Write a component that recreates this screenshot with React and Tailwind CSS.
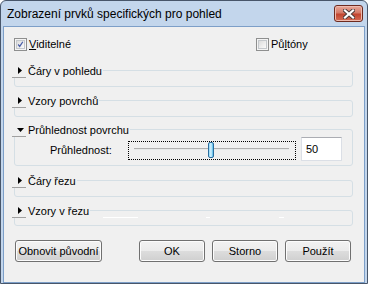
import { useState } from "react";

const btn =
  "flex h-[22px] w-[66px] items-center justify-center rounded-[3px] border border-[#707070] bg-[linear-gradient(#f2f2f2,#ebebeb_50%,#dddddd_50%,#cfcfcf)] shadow-[inset_0_0_0_1px_#fcfcfc]";

function Check({ checked }) {
  return (
    <span className="flex h-[13px] w-[13px] items-center justify-center border border-[#8e8f8f] bg-[#f4f4f4]">
      <span className="flex h-[9px] w-[9px] items-center justify-center border border-[#c4c8cc] bg-[linear-gradient(135deg,#dcdcdc,#fafafa)]">
        {checked && (
          <svg width="9" height="9" viewBox="0 0 9 9">
            <path d="M1.5 4.5 L3.5 7 L7.5 1" fill="none" stroke="#4a5fa8" strokeWidth="1.6" />
          </svg>
        )}
      </span>
    </span>
  );
}

function Section({ title, open, cls, children }) {
  return (
    <div className={`relative w-[339px] rounded-[3px] border border-[#d5dfe5] ${cls}`}>
      <div className="absolute left-[-3px] top-[-7px] flex h-[14px] items-center bg-[#f0f0f0] pr-[1px]">
        <div className="flex h-[14px] w-[14px] items-center border-b border-[#a0a0a0]">
          {open ? (
            <svg className="ml-[5px]" width="7" height="4" viewBox="0 0 7 4">
              <polygon points="0,0 7,0 3.5,4" fill="#000" />
            </svg>
          ) : (
            <svg className="ml-[6px]" width="4" height="7" viewBox="0 0 4 7">
              <polygon points="0,0 4,3.5 0,7" fill="#000" />
            </svg>
          )}
        </div>
        <span className="ml-[2px] leading-[14px]">{title}</span>
      </div>
      {children}
    </div>
  );
}

export default function App() {
  const [visible, setVisible] = useState(true);
  const [half, setHalf] = useState(false);
  const [value] = useState(50);

  return (
    <div className="flex h-[284px] w-[368px] flex-col rounded-t-[6px] border border-[#48566a] bg-[#c3d6ec] font-['Liberation_Sans',Arial,sans-serif] text-[11px] text-black">
      {/* title bar */}
      <div className="flex h-[25px] shrink-0 items-start">
        <span className="mt-[5px] pl-[6px] text-[12px] leading-[16px]">Zobrazení prvků specifických pro pohled</span>
        <div className="ml-auto mr-[4px] mt-[4px] flex h-[17px] w-[29px] items-center justify-center rounded-[3px] border border-[#6d2a1f] bg-[linear-gradient(#e8a899,#d47a68_45%,#c2452f_55%,#d46c55)] shadow-[inset_0_0_0_1px_#eebbaf]">
          <svg width="12" height="10" viewBox="0 0 12 10">
            <path d="M2 1.5 L10 8.5 M10 1.5 L2 8.5" stroke="#4a3a38" strokeWidth="4" strokeLinecap="square" />
            <path d="M2 1.5 L10 8.5 M10 1.5 L2 8.5" stroke="#fff" strokeWidth="2.2" strokeLinecap="square" />
          </svg>
        </div>
      </div>

      {/* client */}
      <div className="mx-[2px] flex flex-1 flex-col border border-[#7d9fc8] bg-[#f0f0f0]">
        <div className="flex pl-[10px] pt-[11px]">
          <label className="flex w-[242px] items-center leading-[13px]" onClick={() => setVisible(!visible)}>
            <Check checked={visible} />
            <span className="ml-[2px]"><u>V</u>iditelné</span>
          </label>
          <label className="flex items-center leading-[13px]" onClick={() => setHalf(!half)}>
            <Check checked={half} />
            <span className="ml-[2px]">Pů<u>l</u>tóny</span>
          </label>
        </div>

        <div className="flex flex-col pl-[10px]">
          <Section title="Čáry v pohledu" cls="mt-[19px] h-[17px]" />
          <Section title="Vzory povrchů" cls="mt-[13px] h-[17px]" />
          <Section title="Průhlednost povrchu" open cls="mt-[12px] h-[37px]">
            <div className="flex">
              <span className="ml-[35px] mt-[13px] w-[78px] leading-[14px]">Průhlednost:</span>
              <div className="relative mt-[11px] h-[19px] w-[168px] border border-dotted border-black">
                <div className="ml-[5px] mt-[6px] h-[2px] w-[155px] border-t border-[#b0b0b0] bg-[#e7eaea]" />
                <div
                  className="absolute top-0 h-[16px] w-[6px] rounded-[2px] border border-[#2c6e9e] bg-[linear-gradient(90deg,#8fd6f7,#d9f3fd_50%,#4fb8ea)]"
                  style={{ left: 4 + Math.round((value / 100) * 150) }}
                />
              </div>
              <div className="ml-[5px] mt-[7px] flex h-[24px] w-[41px] items-center border border-[#dbdfe6] border-t-[#abadb3] bg-white pl-[4px] leading-[14px]">
                {value}
              </div>
            </div>
          </Section>
          <Section title="Čáry řezu" cls="mt-[14px] h-[17px]" />
          <Section title="Vzory v řezu" cls="mt-[13px] h-[16px]">
            <div className="mt-[6px] flex">
              <span className="ml-[88px] h-px w-[35px] bg-white" />
              <span className="ml-[68px] h-px w-[4px] bg-white" />
              <span className="ml-[69px] h-px w-[5px] bg-white" />
            </div>
          </Section>
        </div>

        <div className="mt-[14px] flex pl-[11px]">
          <button className={`${btn} w-[87px]`}>Obnovit původní</button>
          <button className={`${btn} ml-[37px] border-[#3c7fb1] shadow-[inset_0_0_0_1px_#bfe4f8]`}>OK</button>
          <button className={`${btn} ml-[7px]`}>Storno</button>
          <button className={`${btn} ml-[7px]`}>Použít</button>
        </div>
      </div>
    </div>
  );
}
